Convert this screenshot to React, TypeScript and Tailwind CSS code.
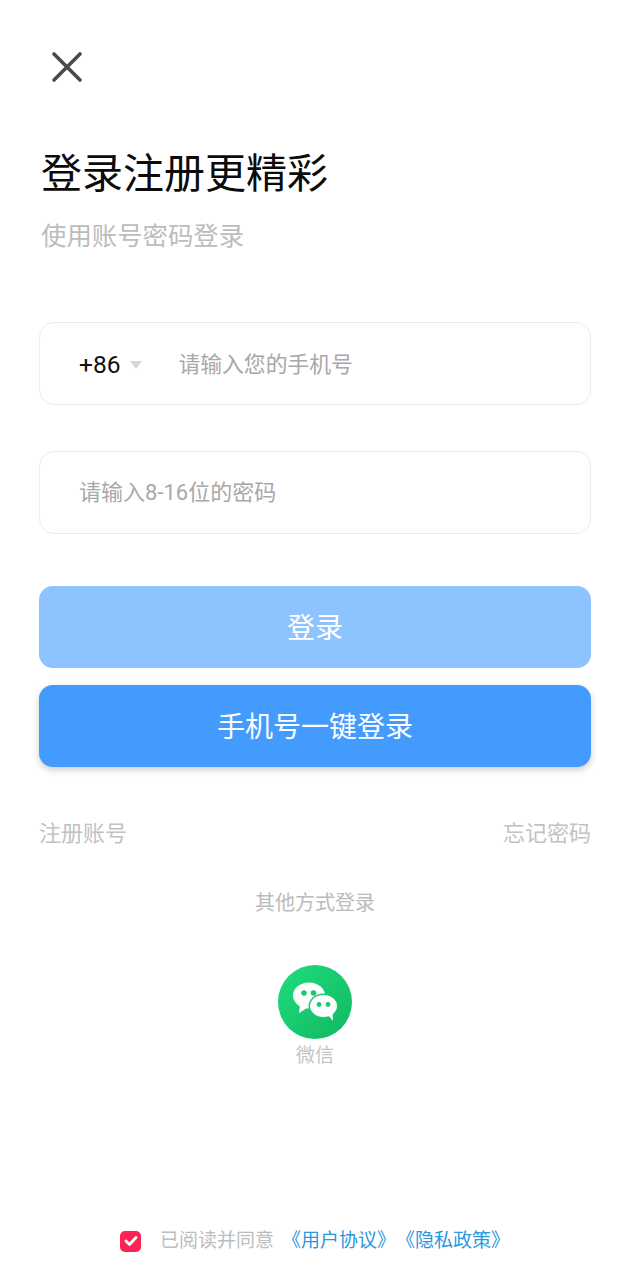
const font = "font-['Roboto','Noto_Sans_CJK_SC',sans-serif]";

const CloseIcon = () => (
  <svg width="32" height="32" viewBox="0 0 32 32" fill="none" stroke="#4a4a4a" strokeWidth="3.6" strokeLinecap="round">
    <path d="M3 3 L29 29 M29 3 L3 29" />
  </svg>
);

const WechatIcon = () => (
  <svg width="74" height="74" viewBox="0 0 74 74">
    <defs>
      <linearGradient id="wx" x1="0" y1="0" x2="1" y2="1">
        <stop offset="0" stopColor="#20dc7e" />
        <stop offset="1" stopColor="#10b862" />
      </linearGradient>
    </defs>
    <circle cx="37" cy="37" r="37" fill="url(#wx)" />
    <ellipse cx="31" cy="30.5" rx="16" ry="13" fill="#fff" />
    <path d="M22 40 L21 48 L29 43 Z" fill="#fff" />
    <circle cx="26" cy="28" r="2.8" fill="#1ac96f" />
    <circle cx="35.5" cy="28" r="2.8" fill="#1ac96f" />
    <ellipse cx="45.5" cy="41" rx="15" ry="12.5" fill="#1ac96f" />
    <ellipse cx="45.5" cy="41" rx="13.5" ry="11" fill="#fff" />
    <path d="M50 50 L55 56 L54.5 46 Z" fill="#fff" />
    <circle cx="41" cy="39.5" r="2.4" fill="#1ac96f" />
    <circle cx="50" cy="39.5" r="2.4" fill="#1ac96f" />
  </svg>
);

const CheckIcon = () => (
  <div className="w-[21px] h-[21px] rounded-[5px] bg-[#fb2455] flex items-center justify-center">
    <svg width="14" height="12" viewBox="0 0 14 12" fill="none" stroke="#fff" strokeWidth="2.8" strokeLinecap="round" strokeLinejoin="round">
      <path d="M2 6 L5.5 9.5 L12 2.5" />
    </svg>
  </div>
);

export default function App() {
  return (
    <div className={`${font} w-[630px] h-[1280px] bg-white flex flex-col overflow-hidden`}>
      <div className="ml-[51px] mt-[51px] w-[32px] h-[32px]">
        <CloseIcon />
      </div>

      <h1 className="ml-[41px] mt-[67px] text-[41px] leading-[48px] text-[#0b0b0b] font-normal">登录注册更精彩</h1>
      <p className="ml-[41px] mt-[23px] text-[25.4px] leading-[30px] text-[#bcbcbc]">使用账号密码登录</p>

      <div className="mx-[39px] mt-[71px] h-[83px] pt-[3px] rounded-[15px] border border-[#ececec] flex items-center">
        <span className="ml-[39px] text-[24.5px] text-[#111]">+86</span>
        <span className="ml-[10px] w-0 h-0 border-x-[6.5px] border-x-transparent border-t-[8px] border-t-[#d6d6d6]" />
        <span className="ml-[36px] text-[21.8px] text-[#a8a8a8]">请输入您的手机号</span>
      </div>

      <div className="mx-[39px] mt-[46px] h-[83px] rounded-[15px] border border-[#ececec] flex items-center">
        <span className="ml-[39px] text-[22px] text-[#a8a8a8]">请输入8-16位的密码</span>
      </div>

      <div className="mx-[39px] mt-[52px] h-[82px] pt-[4px] rounded-[14px] bg-[#8dc3fe] flex items-center justify-center text-white text-[28px]">登录</div>
      <div className="mx-[39px] mt-[17px] h-[82px] pt-[4px] rounded-[14px] bg-[#439bfe] shadow-[0_3px_7px_rgba(0,0,0,0.2)] flex items-center justify-center text-white text-[28px]">手机号一键登录</div>

      <div className="mx-[39px] mt-[52px] h-[28px] flex justify-between items-center text-[22px] text-[#c2c2c2]">
        <span>注册账号</span>
        <span>忘记密码</span>
      </div>

      <div className="mt-[42px] h-[28px] flex items-center justify-center text-[20px] text-[#bbbbbb]">其他方式登录</div>

      <div className="mt-[48px] flex flex-col items-center">
        <WechatIcon />
        <span className="mt-[5px] text-[19px] leading-[24px] text-[#c4c4c4]">微信</span>
      </div>

      <div className="ml-[120px] mt-[159px] h-[28px] flex items-center text-[19px]">
        <CheckIcon />
        <span className="ml-[19px] text-[#bdbdbd]">已阅读并同意</span>
        <span className="ml-[8px] text-[#2a97e0]">《用户协议》</span>
        <span className="ml-0 text-[#2a97e0]">《隐私政策》</span>
      </div>
    </div>
  );
}
